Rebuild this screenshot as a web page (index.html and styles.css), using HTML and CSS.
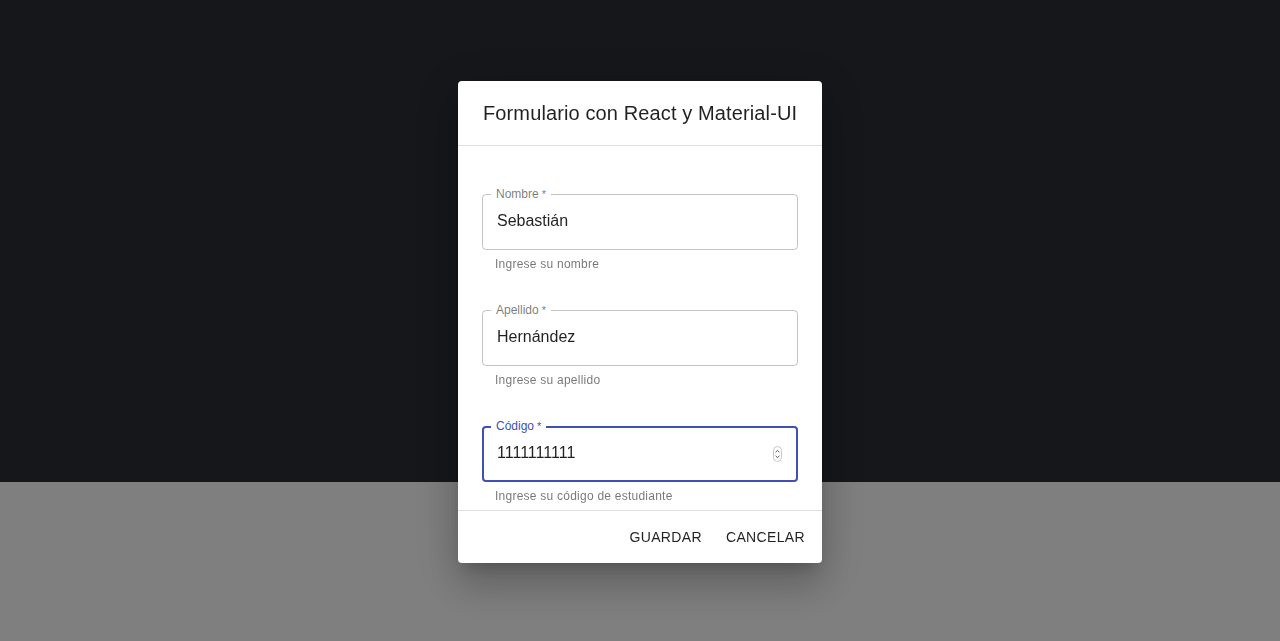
FILE: index.html
```html
<!DOCTYPE html>
<html lang="es">
<head>
<meta charset="utf-8">
<title>Formulario con React y Material-UI</title>
<link rel="stylesheet" href="styles.css">
</head>
<body>
<div class="app">
  <div class="app-top"></div>
  <div class="app-bottom"></div>
</div>
<div class="backdrop">
  <div class="dialog" role="dialog">
    <h2 class="dialog-title">Formulario con React y Material-UI</h2>
    <div class="dialog-content">
      <div class="field">
        <div class="outline">
          <span class="value">Sebastián</span>
        </div>
        <label class="label">Nombre<span class="req">*</span></label>
        <p class="helper">Ingrese su nombre</p>
      </div>
      <div class="field">
        <div class="outline">
          <span class="value">Hernández</span>
        </div>
        <label class="label">Apellido<span class="req">*</span></label>
        <p class="helper">Ingrese su apellido</p>
      </div>
      <div class="field focused">
        <div class="outline">
          <span class="value">1111111111</span>
          <svg class="spin" width="9" height="16" viewBox="0 0 9 16">
            <rect x="0.5" y="0.5" width="8" height="15" rx="4" fill="#fff" stroke="#c8c8c8"/>
            <path d="M2.6 6.2 L4.5 4.4 L6.4 6.2" fill="none" stroke="#555" stroke-width="1"/>
            <path d="M2.6 9.8 L4.5 11.6 L6.4 9.8" fill="none" stroke="#555" stroke-width="1"/>
          </svg>
        </div>
        <label class="label">Código<span class="req">*</span></label>
        <p class="helper">Ingrese su código de estudiante</p>
      </div>
    </div>
    <div class="dialog-actions">
      <button class="btn">Guardar</button>
      <button class="btn">Cancelar</button>
    </div>
  </div>
</div>
</body>
</html>
```
FILE: styles.css
```css
* { box-sizing: border-box; }
html, body { margin: 0; padding: 0; height: 100%; }
body {
  font-family: "Liberation Sans", Arial, Helvetica, sans-serif;
  color: rgba(0, 0, 0, 0.87);
  overflow: hidden;
}
.app { height: 100%; display: flex; flex-direction: column; }
.app-top { height: 482px; background: #2c2e36; }
.app-bottom { flex: 1; background: #ffffff; }

.backdrop {
  position: fixed;
  inset: 0;
  background: rgba(0, 0, 0, 0.5);
  display: flex;
  justify-content: center;
  align-items: flex-start;
  padding-top: 81px;
}
.dialog {
  width: 364px;
  height: 482px;
  background: #fff;
  border-radius: 4px;
  display: flex;
  flex-direction: column;
  box-shadow: 0 11px 15px -7px rgba(0,0,0,0.2), 0 24px 38px 3px rgba(0,0,0,0.14), 0 9px 46px 8px rgba(0,0,0,0.12);
  overflow: hidden;
}
.dialog-title {
  margin: 0;
  padding: 16px 20px 16px 25px;
  font-size: 20px;
  font-weight: 400;
  line-height: 32px;
  letter-spacing: 0.12px;
  white-space: nowrap;
  color: rgba(0, 0, 0, 0.87);
  flex: none;
}
.dialog-content {
  flex: 1;
  overflow: hidden;
  border-top: 1px solid rgba(0, 0, 0, 0.12);
  border-bottom: 1px solid rgba(0, 0, 0, 0.12);
  padding: 48px 24px 16px;
  display: flex;
  flex-direction: column;
  gap: 36px;
}
.field { position: relative; flex: none; }
.outline {
  height: 56px;
  border: 1px solid rgba(0, 0, 0, 0.23);
  border-radius: 4px;
  padding: 0 15px 0 14px;
  display: flex;
  align-items: center;
}
.focused .outline {
  border: 2px solid #3f51b5;
  padding: 0 14px 0 13px;
}
.value {
  font-size: 16px;
  line-height: 19px;
  color: rgba(0, 0, 0, 0.87);
  padding-bottom: 3px;
}
.spin { margin-left: auto; display: block; margin-bottom: 1px; }
.label {
  position: absolute;
  top: -7px;
  left: 9px;
  padding: 0 5px;
  background: #fff;
  font-size: 12px;
  line-height: 14px;
  color: rgba(0, 0, 0, 0.54);
  letter-spacing: 0;
}
.req { margin-left: 3px; font-size: 11px; }
.focused .label { color: #3f51b5; }
.helper {
  margin: 4px 13px 0;
  font-size: 12px;
  line-height: 20px;
  letter-spacing: 0.02em;
  color: rgba(0, 0, 0, 0.54);
}
.dialog-actions {
  flex: none;
  height: 52px;
  padding: 8px 9px 8px 8px;
  display: flex;
  justify-content: flex-end;
  align-items: center;
  gap: 8px;
}
.btn {
  font-family: inherit;
  font-size: 14px;
  font-weight: 400;
  text-transform: uppercase;
  letter-spacing: 0.35px;
  line-height: 24px;
  padding: 6px 8px;
  min-width: 64px;
  border: 0;
  background: transparent;
  color: rgba(0, 0, 0, 0.87);
  border-radius: 4px;
}
```
